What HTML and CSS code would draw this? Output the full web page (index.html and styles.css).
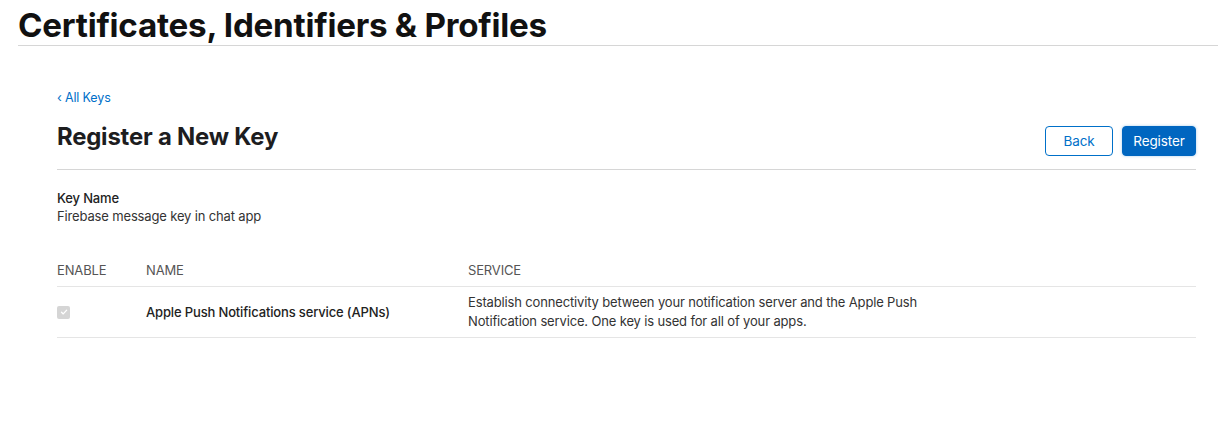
FILE: index.html
```html
<!DOCTYPE html>
<html lang="en">
<head>
<meta charset="utf-8">
<title>Register a New Key</title>
<link rel="stylesheet" href="styles.css">
</head>
<body>
<header class="top">
  <h1 class="top-title">Certificates, Identifiers &amp; Profiles</h1>
</header>
<main class="page">
  <a class="back-link" href="#">‹ All Keys</a>
  <div class="title-row">
    <h2 class="page-title">Register a New Key</h2>
    <div class="actions">
      <button class="btn btn-secondary">Back</button>
      <button class="btn btn-primary">Register</button>
    </div>
  </div>
  <section class="field">
    <div class="field-label">Key Name</div>
    <div class="field-value">Firebase message key in chat app</div>
  </section>
  <div class="table">
    <div class="row head">
      <div class="c-enable">ENABLE</div>
      <div class="c-name">NAME</div>
      <div class="c-service">SERVICE</div>
    </div>
    <div class="row body-row">
      <div class="c-enable"><span class="check"><svg viewBox="0 0 12 12" width="12" height="12"><path d="M3 6.2 L5.1 8.3 L9.2 3.8" fill="none" stroke="#fff" stroke-width="1.6" stroke-linecap="round" stroke-linejoin="round"/></svg></span></div>
      <div class="c-name strong">Apple Push Notifications service (APNs)</div>
      <div class="c-service desc">Establish connectivity between your notification server and the Apple Push Notification service. One key is used for all of your apps.</div>
    </div>
  </div>
</main>
</body>
</html>
```
FILE: styles.css
```css
* { box-sizing: border-box; }
html, body { margin: 0; padding: 0; background: #fff; }
body {
  font-family: Inter, "Noto Sans", "Liberation Sans", sans-serif;
  color: #333;
  -webkit-font-smoothing: antialiased;
}
.top {
  margin-left: 18px;
  border-bottom: 1px solid #d6d6d6;
  height: 46px;
}
.top-title {
  margin: 0;
  padding-top: 5px;
  font-size: 33.2px;
  line-height: 40px;
  font-weight: 700;
  letter-spacing: -0.25px;
  color: #111;
}
.page {
  padding: 44px 22px 0 57px;
  letter-spacing: -0.15px;
}
.back-link {
  display: block;
  font-size: 12.5px;
  line-height: 16px;
  color: #0070c9;
  text-decoration: none;
}
.title-row {
  display: flex;
  justify-content: space-between;
  align-items: flex-start;
  border-bottom: 1px solid #d6d6d6;
  padding-top: 20px;
  height: 64px;
}
.page-title {
  margin: 0;
  font-size: 23.9px;
  line-height: 22px;
  font-weight: 700;
  color: #1d1d1f;
  letter-spacing: -0.2px;
}
.actions { display: flex; gap: 9px; }
.btn {
  font-family: inherit;
  font-size: 13.5px;
  letter-spacing: -0.1px;
  height: 30px;
  border-radius: 4px;
  padding: 0 8px;
  cursor: pointer;
}
.btn-secondary {
  width: 68px;
  background: #fff;
  border: 1px solid #0070c9;
  color: #0070c9;
}
.btn-primary {
  width: 74px;
  background: #0066c0;
  border: 1px solid #0066c0;
  color: #fff;
  box-shadow: 0 0 3px rgba(0,112,201,0.35);
}
.field { padding-top: 19px; font-size: 13px; line-height: 18px; }
.field-label { font-weight: 500; color: #222; }
.field-value { color: #333; }
.table { margin-top: 36px; font-size: 13px; }
.row { display: flex; border-bottom: 1px solid #e5e5e5; }
.row.head { height: 26px; color: #555; line-height: 18px; }
.body-row { align-items: center; height: 51px; }
.c-enable { width: 89px; }
.c-name { width: 322px; }
.c-service { width: 480px; }
.strong { font-weight: 500; color: #222; }
.desc { line-height: 19px; color: #333; }
.check {
  display: inline-flex;
  align-items: center;
  justify-content: center;
  width: 13px; height: 13px;
  border-radius: 2px;
  background: #d5d5d5;
  margin-top: -5px;
}
.check svg { width: 10px; height: 10px; }
```
